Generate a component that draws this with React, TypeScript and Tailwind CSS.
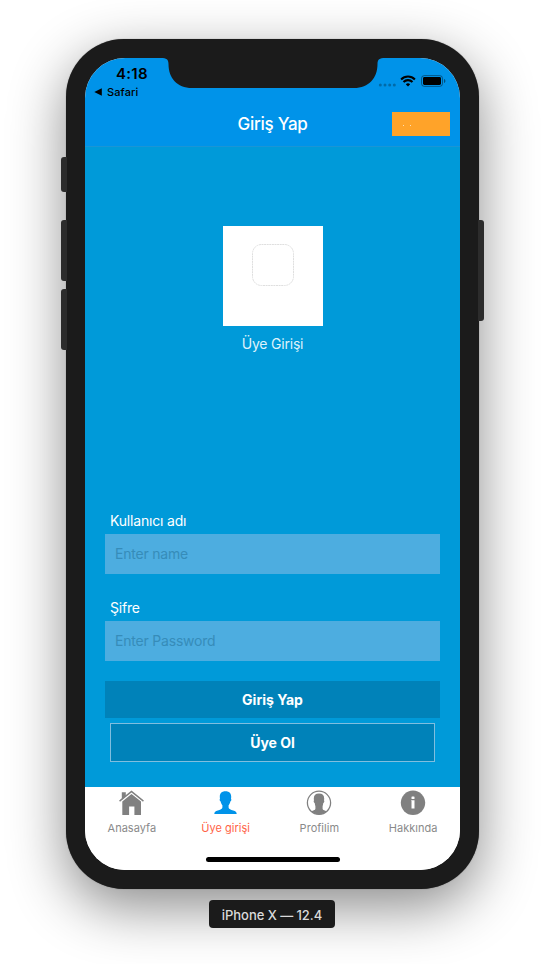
import React from "react";

function StatusBar() {
  return (
    <div className="flex h-11 justify-between text-black">
      <div className="flex w-20 flex-col pl-[9px]">
        <span className="mt-[6px] ml-[22px] text-[15px] leading-5 font-semibold tracking-[0.3px]">4:18</span>
        <span className="flex h-4 items-center gap-[5px] text-[11px] leading-4 font-medium tracking-[0.1px]">
          <svg width="8" height="8" viewBox="0 0 8 8"><path d="M0.300 4 7.800 0.200v7.600z" /></svg>
          Safari
        </span>
      </div>
      <div className="mt-[16px] flex h-[13px] items-center pr-[14px]">
        <svg width="18" height="12" viewBox="0 0 18 12" className="mt-[8px] mr-[4px]" fill="#000" opacity="0.28">
          <circle cx="2.300" cy="6" r="1.500" /><circle cx="7" cy="6" r="1.500" /><circle cx="11.700" cy="6" r="1.500" /><circle cx="16.300" cy="6" r="1.500" />
        </svg>
        <svg width="16" height="12" viewBox="0 0 16 12" className="mr-[5px]" fill="none" stroke="#000" strokeWidth="2.1">
          <path d="M1.1 4.4a9.8 9.8 0 0 1 13.8 0" />
          <path d="M3.5 7a6.4 6.4 0 0 1 9 0" />
          <path d="M8 11.5 5.8 9.2a3.2 3.2 0 0 1 4.4 0z" fill="#000" stroke="none" />
        </svg>
        <svg width="25" height="12" viewBox="0 0 25 12">
          <rect x="0.5" y="0.6" width="21" height="10.8" rx="2.8" fill="none" stroke="#000" strokeOpacity="0.4" />
          <rect x="2" y="2.1" width="18" height="7.8" rx="1.4" />
          <path d="M23 4v4c.9-.4 1.4-1.1 1.4-2S23.900 4.400 23 4z" opacity="0.45" />
        </svg>
      </div>
    </div>
  );
}

function Notch() {
  return (
    <svg className="absolute top-0 left-[76px]" width="224" height="31" viewBox="0 0 224 31" fill="#1b1b1b">
      <path d="M0 -1H224V0C218.500 0 216.500 1.500 216.500 6C216.500 20 208 30 193 30H31C16 30 7.500 20 7.500 6C7.500 1.500 5.500 0 0 0Z" />
    </svg>
  );
}

function HomeIcon() {
  return (
    <svg width="26" height="26" viewBox="0 0 26 26" fill="#808080">
      <path d="M2.800 2.200h4v4l-4 3.500z" />
      <path d="M12.500 .6 24.900 10.600 24 11.700 12.500 2.500 1 11.700.1 10.600z" />
      <path d="M12.500 3.900 22 11.600V24.900H15.400V16.500h-5.300V24.900H3.300V11.600z" />
    </svg>
  );
}

function UserIcon() {
  return (
    <svg width="26" height="26" viewBox="0 0 26 26" fill="#0093e9">
      <path d="M12.500 1.200c3.900 0 5.700 2.100 5.700 5.500 0 .8-.1 1.500-.2 2.100.6.400.4 2.400-.7 2.800-.2 1.600-.9 2.800-1.700 3.700v2.200c0 1.600 2.300 2.200 4.600 3.100 2.300.8 3.500 1.500 3.500 3.400H1.300c0-1.900 1.200-2.600 3.500-3.400 2.300-.9 4.600-1.500 4.600-3.100v-2.200c-.8-.9-1.500-2.100-1.700-3.700-1.100-.4-1.300-2.400-.7-2.800-.1-.6-.2-1.300-.2-2.100 0-3.400 1.800-5.500 5.700-5.500z" />
    </svg>
  );
}

function ProfileIcon() {
  return (
    <svg width="26" height="26" viewBox="0 0 26 26">
      <defs><clipPath id="profile"><circle cx="13" cy="12.800" r="11.600" /></clipPath></defs>
      <circle cx="13" cy="12.800" r="11.600" fill="none" stroke="#808080" strokeWidth="1.300" />
      <path clipPath="url(#profile)" fill="#808080" d="M13 3.600c3.500 0 5.200 1.900 5.200 4.900 0 .8-.1 1.400-.2 1.900.6.400.4 2.300-.7 2.700-.2 1.400-.4 2.500-.7 3.200v2.400c0 1.400 2.300 1.700 5.600 3.300V26H3.800v-4c3.300-1.600 5.600-1.900 5.600-3.300v-2.400c-.3-.7-.5-1.800-.7-3.200-1.100-.4-1.300-2.300-.7-2.700-.1-.5-.2-1.100-.2-1.900 0-3 1.700-4.900 5.200-4.900z" />
    </svg>
  );
}

function InfoIcon() {
  return (
    <svg width="26" height="26" viewBox="0 0 26 26">
      <circle cx="13" cy="12.800" r="12.200" fill="#808080" />
      <rect x="11.500" y="6.500" width="3" height="2.500" rx=".6" fill="#fff" />
      <path d="M11.200 10.200h3.300v8.400h-3v-7.600h-.3z" fill="#fff" />
    </svg>
  );
}

const tabs = [
  { label: "Anasayfa", icon: <HomeIcon />, style: "text-[#8a8a8a] tracking-[0.02px]" },
  { label: "Üye girişi", icon: <UserIcon />, style: "text-[#ff6347] tracking-[0.04px]" },
  { label: "Profilim", icon: <ProfileIcon />, style: "text-[#8a8a8a] tracking-[0.04px]" },
  { label: "Hakkında", icon: <InfoIcon />, style: "text-[#8a8a8a] tracking-[0.02px]" },
];

function Field({ label, placeholder, type }: { label: string; placeholder: string; type: string }) {
  return (
    <label className="block">
      <span className="block h-[26px] pl-[5px] text-[14px] leading-[26px] tracking-[-0.18px] text-white">{label}</span>
      <input type={type} placeholder={placeholder} className="block h-10 w-full bg-[#4dade0] px-[10px] pb-[2px] text-[14px] tracking-[-0.2px] text-white outline-none placeholder:text-[#368cb9] placeholder:opacity-100" />
    </label>
  );
}

export default function App() {
  return (
    <div className="flex h-[964px] w-[545px] flex-col items-center overflow-hidden bg-white pt-[39px] font-['Inter','Liberation_Sans',sans-serif]">
      <div className="relative h-[850px] w-[413px] shrink-0 rounded-[58px] bg-[#1b1b1b] p-[19px] shadow-[0_18px_56px_rgba(0,0,0,0.46),0_0_1px_rgba(0,0,0,0.5)]">
        <div className="absolute top-[118px] -left-[5px] h-[35px] w-[6px] rounded-l-[3px] bg-[#2c2c2c]" />
        <div className="absolute top-[181px] -left-[5px] h-[61px] w-[6px] rounded-l-[3px] bg-[#2c2c2c]" />
        <div className="absolute top-[250px] -left-[5px] h-[61px] w-[6px] rounded-l-[3px] bg-[#2c2c2c]" />
        <div className="absolute top-[181px] -right-[5px] h-[101px] w-[6px] rounded-r-[3px] bg-[#2c2c2c]" />

        <div className="relative flex h-[812px] w-[375px] flex-col overflow-hidden rounded-[40px] bg-white">
          <header className="h-[89px] shrink-0 border-b border-[#1a95d5] bg-[#0093e9]">
            <StatusBar />
            <div className="grid h-11 grid-cols-[1fr_auto_1fr] items-center">
              <span />
              <h1 className="text-[17px] leading-5 font-medium tracking-[-0.25px] text-white">Giriş Yap</h1>
              <button className="mr-[10px] flex h-6 w-[58px] justify-self-end bg-[#ffa329] pt-[13px] pl-[11px]">
                <span className="flex gap-[6px]">
                  <i className="size-px bg-[#ffe0b5]" />
                  <i className="size-px bg-[#ffe0b5]" />
                </span>
              </button>
            </div>
          </header>
          <Notch />

          <main className="flex h-[640px] shrink-0 flex-col bg-[#009ad9] pt-[79px]">
            <div className="flex flex-col items-center">
              <div className="flex h-[100px] w-[100px] justify-center bg-white pt-[18px]">
                <svg width="42" height="42" viewBox="0 0 42 42">
                  <rect x="0.500" y="0.500" width="41" height="41" rx="9" fill="none" stroke="#dfdfdf" strokeDasharray="2 0.600" />
                </svg>
              </div>
              <p className="mt-2 text-[14px] leading-5 tracking-[-0.2px] text-[#dff2fb]">Üye Girişi</p>
            </div>
            <form className="mt-auto flex flex-col px-5 pb-[25px]">
              <Field label="Kullanıcı adı" placeholder="Enter name" type="text" />
              <div className="h-[21px]" />
              <Field label="Şifre" placeholder="Enter Password" type="password" />
              <button type="button" className="mt-5 h-[37px] bg-[#0082b9] text-[14px] font-bold text-white">Giriş Yap</button>
              <button type="button" className="mx-[5px] mt-[5px] h-[39px] border border-[#80bedf] bg-[#0082b9] text-[14px] font-bold text-white">Üye Ol</button>
            </form>
          </main>

          <nav className="flex h-[83px] flex-col items-center bg-white">
            <div className="flex w-full">
              {tabs.map((tab) => (
                <div key={tab.label} className="flex flex-1 flex-col items-center pt-[3px]">
                  {tab.icon}
                  <span className={"mt-[4px] text-[11px] leading-4 " + tab.style}>{tab.label}</span>
                </div>
              ))}
            </div>
            <div className="mt-[21px] h-[5px] w-[134px] rounded-full bg-black" />
          </nav>
        </div>
      </div>
      <div className="relative mt-[11px] mr-px flex h-7 w-[126px] shrink-0 items-center justify-center rounded-[4px] bg-[#1b1b1b] pt-[3px] text-[13px] font-medium tracking-[-0.05px] text-[#dadada]">
        iPhone X — 12.4
      </div>
    </div>
  );
}
